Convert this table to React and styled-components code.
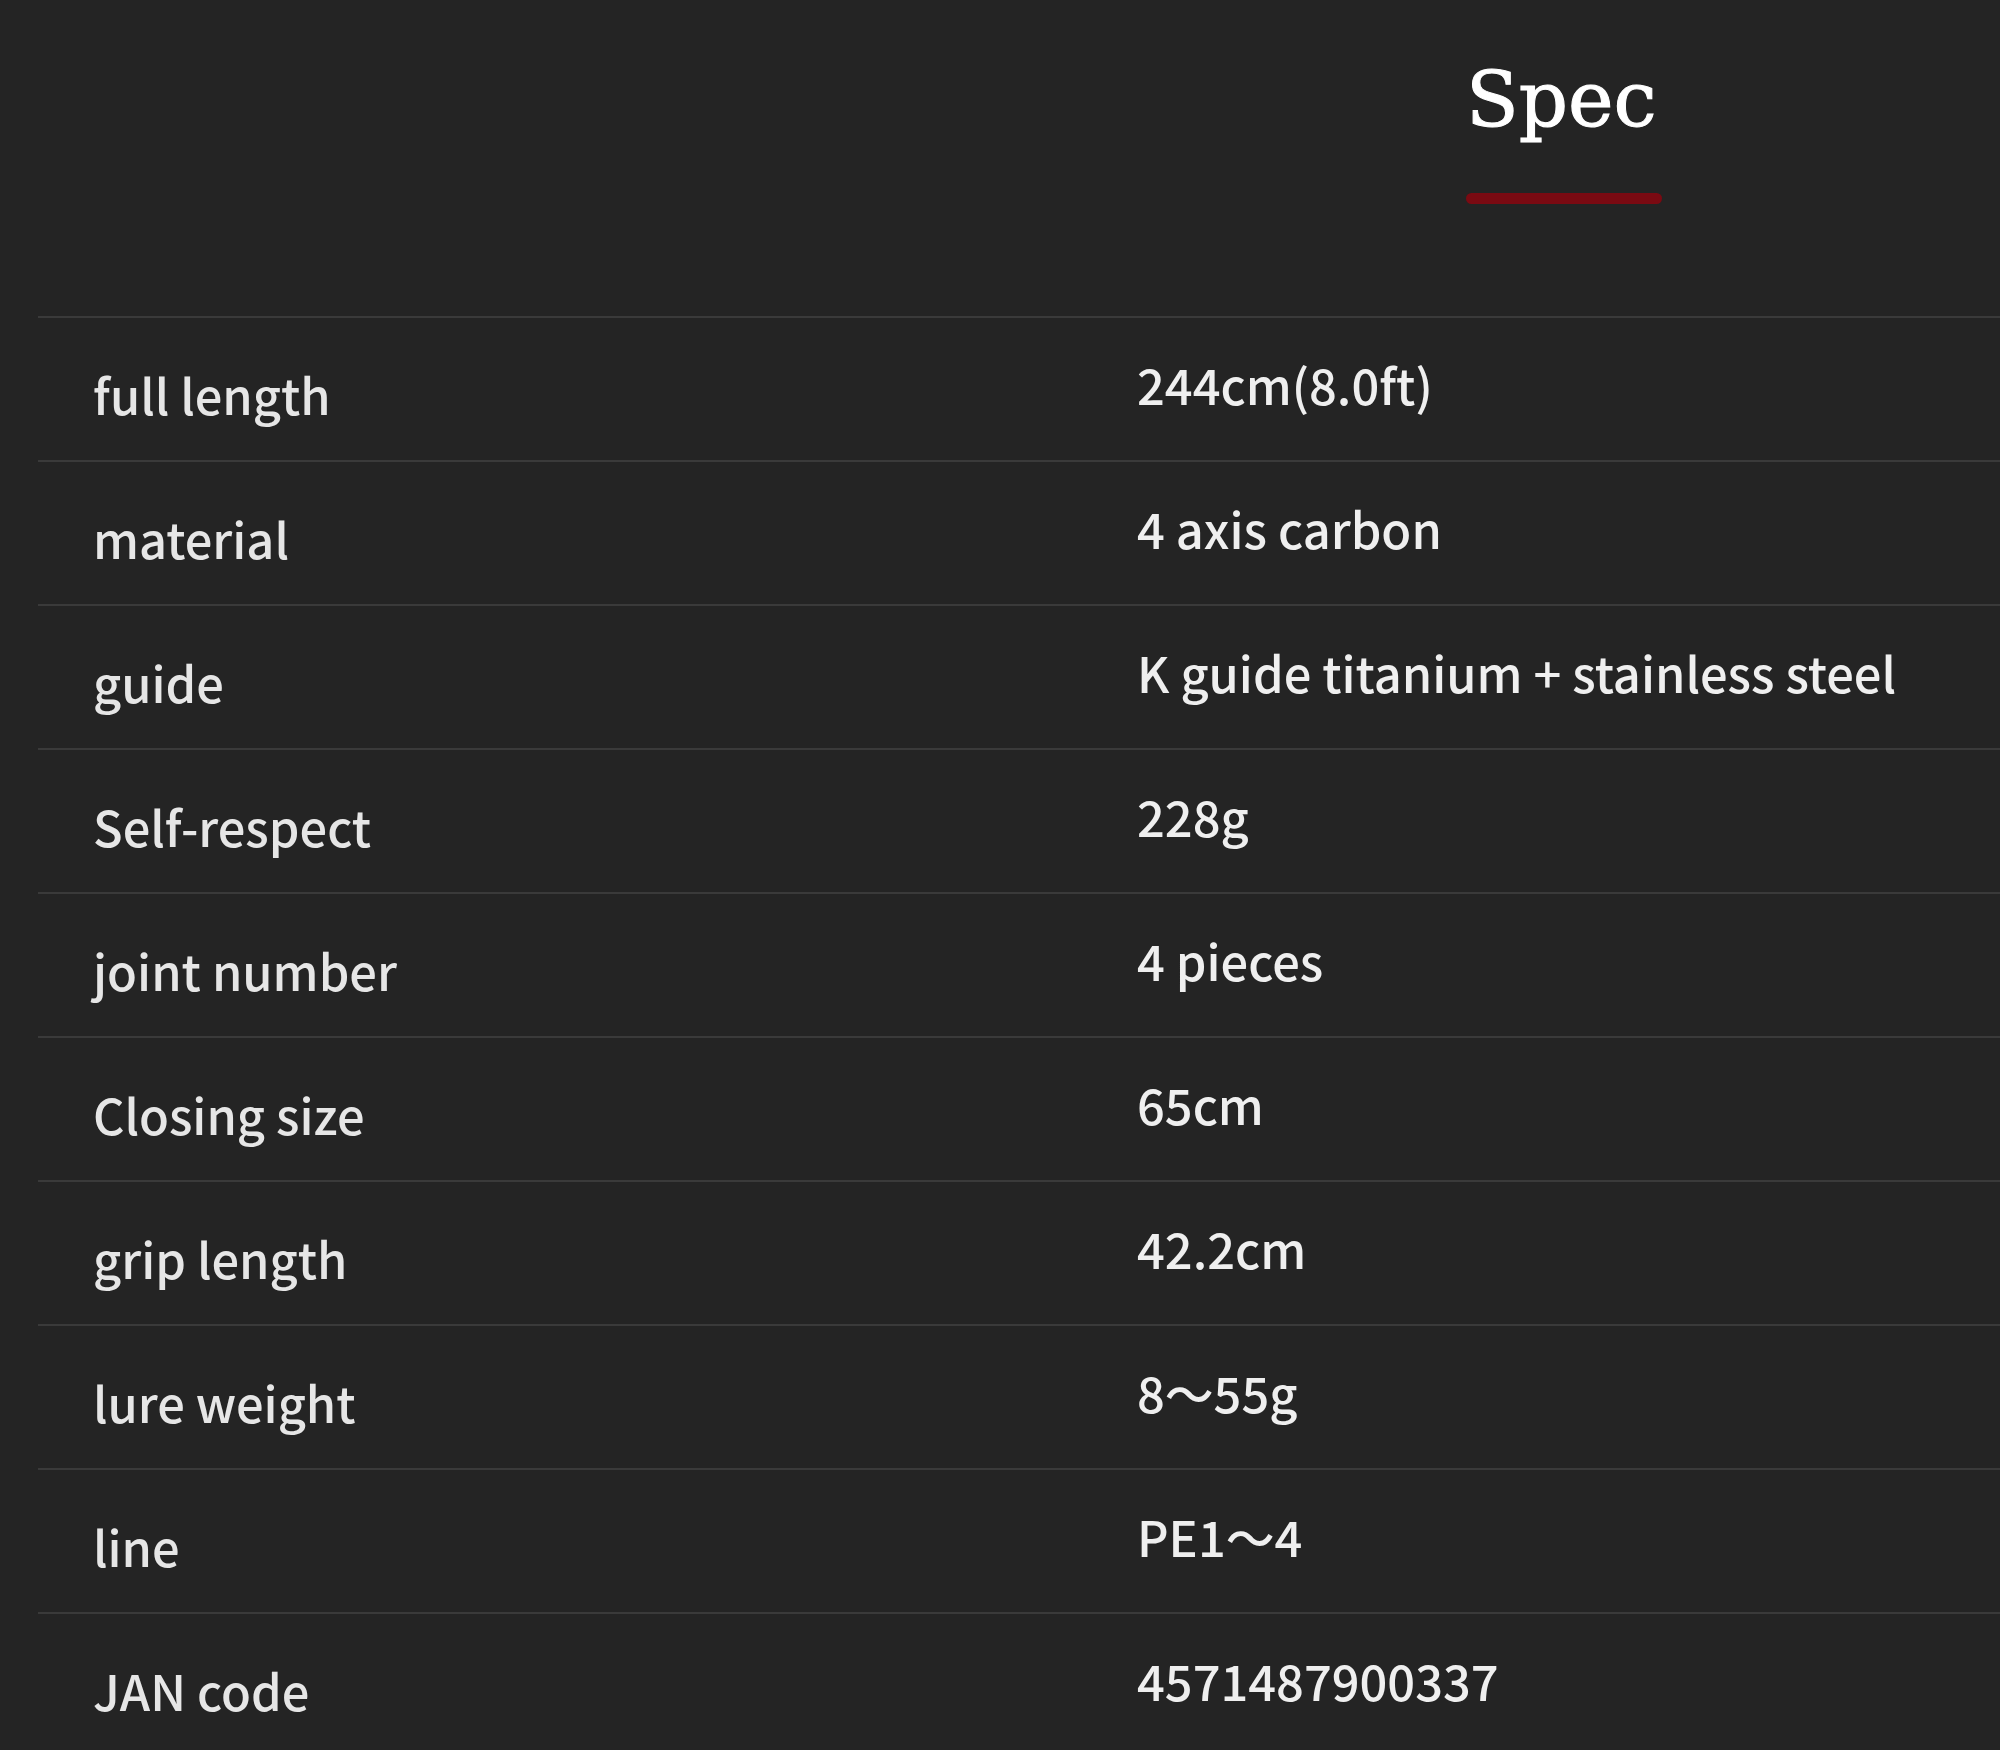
import React from 'react';
import styled, { createGlobalStyle } from 'styled-components';

const GlobalStyle = createGlobalStyle`
    html, body {
        margin: 0;
        padding: 0;
        overflow: hidden;
        background: #242424;
    }
    body {
        font-family: "Noto Sans CJK JP", "Noto Sans", sans-serif;
        color: #ececec;
    }
`;

const Page = styled.main`
    width: 2000px;
    height: 1750px;
    overflow: hidden;
    background: #242424;
`;

const Heading = styled.header`
    padding: 61px 0 0 1466px;
    display: flex;
    flex-direction: column;
    align-items: flex-start;
`;

const Title = styled.h2`
    margin: 0;
    font-family: "DejaVu Serif", "Liberation Serif", serif;
    font-weight: normal;
    font-size: 77px;
    line-height: 1;
    color: #ffffff;
    -webkit-text-stroke: 1px #ffffff;
`;

const Underline = styled.span`
    display: block;
    width: 196px;
    height: 11px;
    margin-top: 55px;
    border-radius: 6px;
    background: #7a0a12;
`;

const SpecTable = styled.section`
    margin: 112px 0 0 38px;
    width: 2100px;
    border-top: 2px solid #3a3a3a;
`;

const Row = styled.div`
    display: grid;
    grid-template-columns: 1044px 1fr;
    height: 144px;
    box-sizing: border-box;
    border-bottom: 2px solid #3a3a3a;
`;

const Cell = styled.div`
    padding: ${({ $top }) => $top}px 0 0 55px;
    font-size: 48.8px;
    font-weight: 500;
    line-height: 1;
    color: ${({ $value }) => ($value ? '#efefef' : '#e6e6e6')};
    white-space: nowrap;
`;

const specs = [
    ['full length', '244cm(8.0ft)'],
    ['material', '4 axis carbon'],
    ['guide', 'K guide titanium + stainless steel'],
    ['Self-respect', '228g'],
    ['joint number', '4 pieces'],
    ['Closing size', '65cm'],
    ['grip length', '42.2cm'],
    ['lure weight', '8～55g'],
    ['line', 'PE1～4'],
    ['JAN code', '4571487900337']
];

const App = () => (
    <Page>
        <GlobalStyle />
        <Heading>
            <Title>Spec</Title>
            <Underline />
        </Heading>
        <SpecTable>
            {specs.map(([label, value]) => (
                <Row key={label}>
                    <Cell $top={52}>{label}</Cell>
                    <Cell $top={42} $value>
                        {value}
                    </Cell>
                </Row>
            ))}
        </SpecTable>
    </Page>
);

export default App;
